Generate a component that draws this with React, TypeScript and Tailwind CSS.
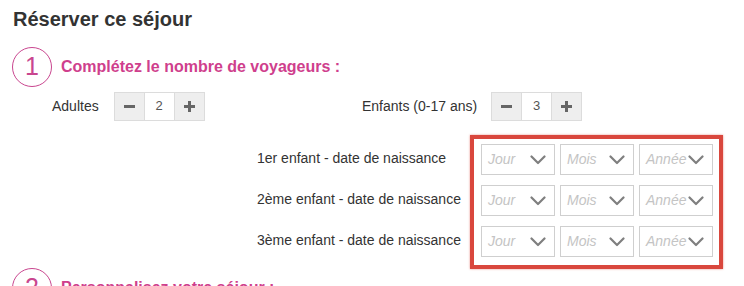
function Stepper({ value }: { value: number }) {
  return (
    <div className="flex h-[29px] border border-[#dcdcdc]">
      <button className="flex w-[29px] items-center justify-center bg-[#eeeeee]">
        <span className="block h-[3px] w-[11px] bg-[#666]" />
      </button>
      <div className="flex w-[31px] items-center justify-center border-x border-[#dcdcdc] bg-white pb-[2px] text-[13px] text-[#555]">
        {value}
      </div>
      <button className="relative flex w-[29px] items-center justify-center bg-[#eeeeee]">
        <span className="block h-[3px] w-[11px] bg-[#666]" />
        <span className="absolute h-[11px] w-[3px] bg-[#666]" />
      </button>
    </div>
  );
}

function SelectBox({ placeholder }: { placeholder: string }) {
  return (
    <div className="flex h-[31px] w-[74px] items-center justify-between border border-[#cfcfcf] bg-white pl-[6px] pr-[8px]">
      <span className="text-[14px] italic text-[#c4c4c4]">{placeholder}</span>
      <svg width="16" height="10" viewBox="0 0 16 10" fill="none" className="mt-[1px]">
        <polyline points="1.5,1.5 8,8 14.5,1.5" stroke="#7f7f7f" strokeWidth="2.2" strokeLinecap="round" strokeLinejoin="round" />
      </svg>
    </div>
  );
}

function StepTitle({ n, label }: { n: number; label: string }) {
  return (
    <div className="flex items-center gap-[9px]">
      <div className="flex h-[40px] w-[40px] items-center justify-center rounded-full border border-[#c9468f] text-[25px] text-[#c9468f]">
        {n}
      </div>
      <h3 className="text-[16px] font-bold text-[#cf3f8d]">{label}</h3>
    </div>
  );
}

const children = ['1er enfant', '2ème enfant', '3ème enfant'];

export default function App() {
  return (
    <div
      className="h-[286px] w-[744px] overflow-hidden bg-white pl-[12px] pt-[7px] text-[#333]"
      style={{ fontFamily: '"Liberation Sans", Arial, sans-serif' }}
    >
      <h2 className="pl-[1px] text-[20px] font-bold leading-[24px] text-[#333]">Réserver ce séjour</h2>

      <div className="mt-[16px]">
        <StepTitle n={1} label="Complétez le nombre de voyageurs :" />
      </div>

      {/* Steppers */}
      <div className="mt-[5px] flex items-center pl-[40px] text-[14px]">
        <div className="flex w-[310px] items-center gap-[15px]">
          <span>Adultes</span>
          <Stepper value={2} />
        </div>
        <div className="flex items-center gap-[14px]">
          <span>Enfants (0-17 ans)</span>
          <Stepper value={3} />
        </div>
      </div>

      {/* Children birth dates */}
      <div className="mt-[23px] flex pl-[245px] text-[14px]">
        <div className="flex w-[224px] flex-col gap-[10px]">
          {children.map(c => (
            <div key={c} className="flex h-[31px] items-center pb-[2px]">
              {c} - date de naissance
            </div>
          ))}
        </div>
        <div className="relative flex flex-col gap-[10px]">
          {children.map(c => (
            <div key={c} className="flex gap-[5px]">
              <SelectBox placeholder="Jour" />
              <SelectBox placeholder="Mois" />
              <SelectBox placeholder="Année" />
            </div>
          ))}
          <div className="pointer-events-none absolute -bottom-[12px] -left-[11px] -right-[10px] -top-[9px] border-[4px] border-[#d9473d] shadow-[0_0_2px_rgba(217,71,61,0.6)]" />
        </div>
      </div>

      <div className="mt-[11px]">
        <StepTitle n={2} label="Personnalisez votre séjour :" />
      </div>
    </div>
  );
}
